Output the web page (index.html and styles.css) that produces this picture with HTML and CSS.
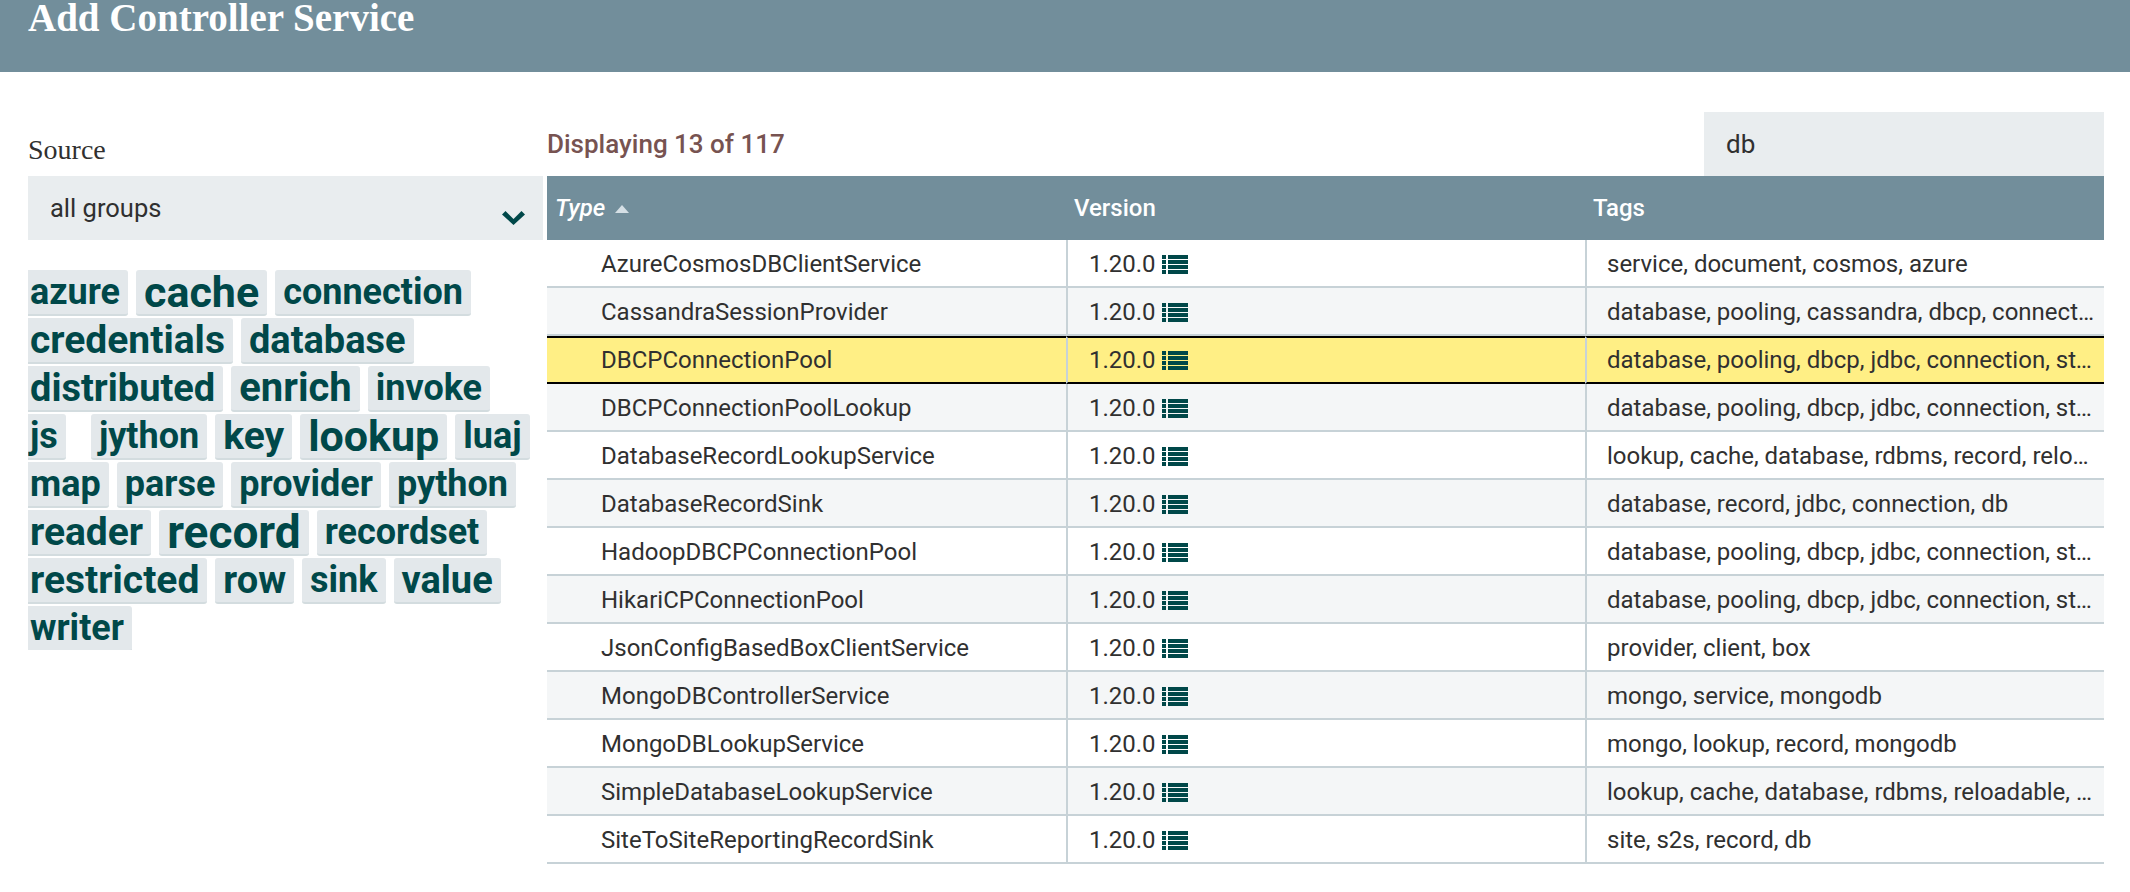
FILE: index.html
```html
<!DOCTYPE html>
<html>

<head>
    <title>Add Controller Service</title>
    <link rel="stylesheet" href="styles.css">
</head>

<body>

    <svg class="sprites" width="0" height="0">
        <symbol id="list" viewBox="0 0 26 19">
            <rect x="0" y="0" width="4" height="4" />
            <rect x="6" y="0" width="20" height="4" />
            <rect x="0" y="5" width="4" height="4" />
            <rect x="6" y="5" width="20" height="4" />
            <rect x="0" y="10" width="4" height="4" />
            <rect x="6" y="10" width="20" height="4" />
            <rect x="0" y="15" width="4" height="4" />
            <rect x="6" y="15" width="20" height="4" />
        </symbol>
    </svg>

    <header class="dialog-header">Add Controller Service</header>

    <main class="dialog-content">
        <section class="filters">
            <label class="source-label">Source</label>
            <div class="source-select">
                <span>all groups</span>
                <svg class="chevron" viewBox="0 0 23 14" width="23" height="14">
                    <path d="M0 3.5 L3.5 0 L11.5 8 L19.5 0 L23 3.5 L11.5 14 Z" />
                </svg>
            </div>
            <div class="tag-cloud">
                <ul>
                    <li class="s36">azure</li>
                    <li class="s43">cache</li>
                    <li class="s36">connection</li>
                    <li class="s39">credentials</li>
                    <li class="s38">database</li>
                    <li class="s38">distributed</li>
                    <li class="s40">enrich</li>
                    <li class="s36">invoke</li>
                    <li class="s36 js">js</li>
                    <li class="s36">jython</li>
                    <li class="s39">key</li>
                    <li class="s43">lookup</li>
                    <li class="s36">luaj</li>
                    <li class="s36">map</li>
                    <li class="s36">parse</li>
                    <li class="s36">provider</li>
                    <li class="s36">python</li>
                    <li class="s39">reader</li>
                    <li class="s46">record</li>
                    <li class="s36">recordset</li>
                    <li class="s39">restricted</li>
                    <li class="s38">row</li>
                    <li class="s36">sink</li>
                    <li class="s38">value</li>
                    <li class="s36">writer</li>
                </ul>
            </div>
        </section>

        <section class="types">
            <div class="toolbar">
                <span class="count">Displaying 13 of 117</span>
                <div class="search">db</div>
            </div>
            <table class="types-table">
                <thead>
                    <tr>
                        <th class="sorted">Type <span class="sort-caret"></span></th>
                        <th>Version</th>
                        <th>Tags</th>
                    </tr>
                </thead>
                <tbody>
                    <tr>
                        <td>AzureCosmosDBClientService</td>
                        <td>1.20.0 <svg class="list-icon"><use href="#list" /></svg></td>
                        <td>service, document, cosmos, azure</td>
                    </tr>
                    <tr>
                        <td>CassandraSessionProvider</td>
                        <td>1.20.0 <svg class="list-icon"><use href="#list" /></svg></td>
                        <td>database, pooling, cassandra, dbcp, connection, store</td>
                    </tr>
                    <tr class="selected">
                        <td>DBCPConnectionPool</td>
                        <td>1.20.0 <svg class="list-icon"><use href="#list" /></svg></td>
                        <td>database, pooling, dbcp, jdbc, connection, store</td>
                    </tr>
                    <tr>
                        <td>DBCPConnectionPoolLookup</td>
                        <td>1.20.0 <svg class="list-icon"><use href="#list" /></svg></td>
                        <td>database, pooling, dbcp, jdbc, connection, store</td>
                    </tr>
                    <tr>
                        <td>DatabaseRecordLookupService</td>
                        <td>1.20.0 <svg class="list-icon"><use href="#list" /></svg></td>
                        <td>lookup, cache, database, rdbms, record, reloadable, key</td>
                    </tr>
                    <tr>
                        <td>DatabaseRecordSink</td>
                        <td>1.20.0 <svg class="list-icon"><use href="#list" /></svg></td>
                        <td>database, record, jdbc, connection, db</td>
                    </tr>
                    <tr>
                        <td>HadoopDBCPConnectionPool</td>
                        <td>1.20.0 <svg class="list-icon"><use href="#list" /></svg></td>
                        <td>database, pooling, dbcp, jdbc, connection, store</td>
                    </tr>
                    <tr>
                        <td>HikariCPConnectionPool</td>
                        <td>1.20.0 <svg class="list-icon"><use href="#list" /></svg></td>
                        <td>database, pooling, dbcp, jdbc, connection, store</td>
                    </tr>
                    <tr>
                        <td>JsonConfigBasedBoxClientService</td>
                        <td>1.20.0 <svg class="list-icon"><use href="#list" /></svg></td>
                        <td>provider, client, box</td>
                    </tr>
                    <tr>
                        <td>MongoDBControllerService</td>
                        <td>1.20.0 <svg class="list-icon"><use href="#list" /></svg></td>
                        <td>mongo, service, mongodb</td>
                    </tr>
                    <tr>
                        <td>MongoDBLookupService</td>
                        <td>1.20.0 <svg class="list-icon"><use href="#list" /></svg></td>
                        <td>mongo, lookup, record, mongodb</td>
                    </tr>
                    <tr>
                        <td>SimpleDatabaseLookupService</td>
                        <td>1.20.0 <svg class="list-icon"><use href="#list" /></svg></td>
                        <td>lookup, cache, database, rdbms, reloadable, key, value</td>
                    </tr>
                    <tr>
                        <td>SiteToSiteReportingRecordSink</td>
                        <td>1.20.0 <svg class="list-icon"><use href="#list" /></svg></td>
                        <td>site, s2s, record, db</td>
                    </tr>
                </tbody>
            </table>
        </section>
    </main>

</body>

</html>
```
FILE: styles.css
```css
body {
    margin: 0;
    height: 892px;
    overflow: hidden;
    font-family: 'Roboto', sans-serif;
    font-size: 24px;
    color: #303030;
    background-color: #fff;
}

.sprites {
    position: absolute;
}

.dialog-header {
    height: 72px;
    box-sizing: border-box;
    padding-left: 28px;
    background-color: #728e9b;
    color: #fff;
    font-family: 'Liberation Serif', serif;
    font-weight: bold;
    font-size: 39px;
    line-height: 36px;
}

.dialog-content {
    display: flex;
    gap: 4px;
    padding: 40px 26px 0 28px;
}

.filters {
    width: 515px;
    flex: none;
}

.source-label {
    display: flex;
    align-items: flex-end;
    height: 64px;
    padding-bottom: 10px;
    box-sizing: border-box;
    font-family: 'Liberation Serif', serif;
    font-size: 28px;
    line-height: 32px;
}

.source-select {
    display: flex;
    justify-content: space-between;
    height: 64px;
    padding: 0 18px 0 22px;
    box-sizing: border-box;
    font-size: 25.5px;
    line-height: 64px;
    background-color: #e9edef;
}

.chevron {
    margin-top: 35px;
    fill: #004849;
}

.tag-cloud {
    height: 380px;
    margin-top: 30px;
    overflow: hidden;
}

.tag-cloud ul {
    display: flex;
    flex-wrap: wrap;
    gap: 2px 8px;
    margin: 0 0 0 -6px;
    padding: 0;
    list-style: none;
}

.tag-cloud li {
    height: 44px;
    padding: 0 8px;
    border-bottom: 2px solid #d3dcdf;
    border-radius: 3px;
    background-color: #e3e8eb;
    color: #004849;
    font-weight: bold;
    line-height: 44px;
}

.tag-cloud .js {
    margin-right: 17px;
}

.s36 { font-size: 36px; }
.s38 { font-size: 38px; }
.s39 { font-size: 39px; }
.s40 { font-size: 40px; }
.s43 { font-size: 43px; }
.s46 { font-size: 46px; }

.types {
    flex: 1;
    min-width: 0;
}

.toolbar {
    display: flex;
    justify-content: space-between;
    align-items: center;
    height: 64px;
}

.count {
    color: #775351;
    font-size: 26px;
    font-weight: 500;
}

.search {
    width: 400px;
    height: 64px;
    padding-left: 22px;
    box-sizing: border-box;
    font-size: 26px;
    line-height: 64px;
    background-color: #e9edef;
}

.types-table {
    width: 100%;
    border-collapse: separate;
    border-spacing: 0;
    table-layout: fixed;
}

.types-table th {
    height: 64px;
    padding: 0 0 0 8px;
    text-align: left;
    font-weight: 500;
    color: #fff;
    background-color: #728e9b;
}

.types-table th.sorted {
    font-style: italic;
}

.sort-caret {
    display: inline-block;
    margin-left: 4px;
    vertical-align: 3px;
    border-left: 7px solid transparent;
    border-right: 7px solid transparent;
    border-bottom: 8px solid #d5dfe5;
}

.types-table td {
    height: 48px;
    box-sizing: border-box;
    padding: 1px 6px 0 21px;
    border-bottom: 2px solid #c7d2d7;
    border-left: 2px solid #c7d2d7;
    white-space: nowrap;
    overflow: hidden;
    text-overflow: ellipsis;
}

.types-table td:first-child {
    padding-left: 54px;
    border-left: 0;
}

.types-table td:last-child {
    padding-left: 20px;
}

.types-table tbody tr:nth-child(even) td {
    background-color: #f4f6f7;
}

.types-table tbody tr.selected td {
    padding-top: 0;
    background-color: #ffef85;
    border-top: 2px solid #000;
    border-bottom: 2px solid #000;
}

.list-icon {
    width: 26px;
    height: 19px;
    vertical-align: -2px;
    fill: #004849;
}
```
